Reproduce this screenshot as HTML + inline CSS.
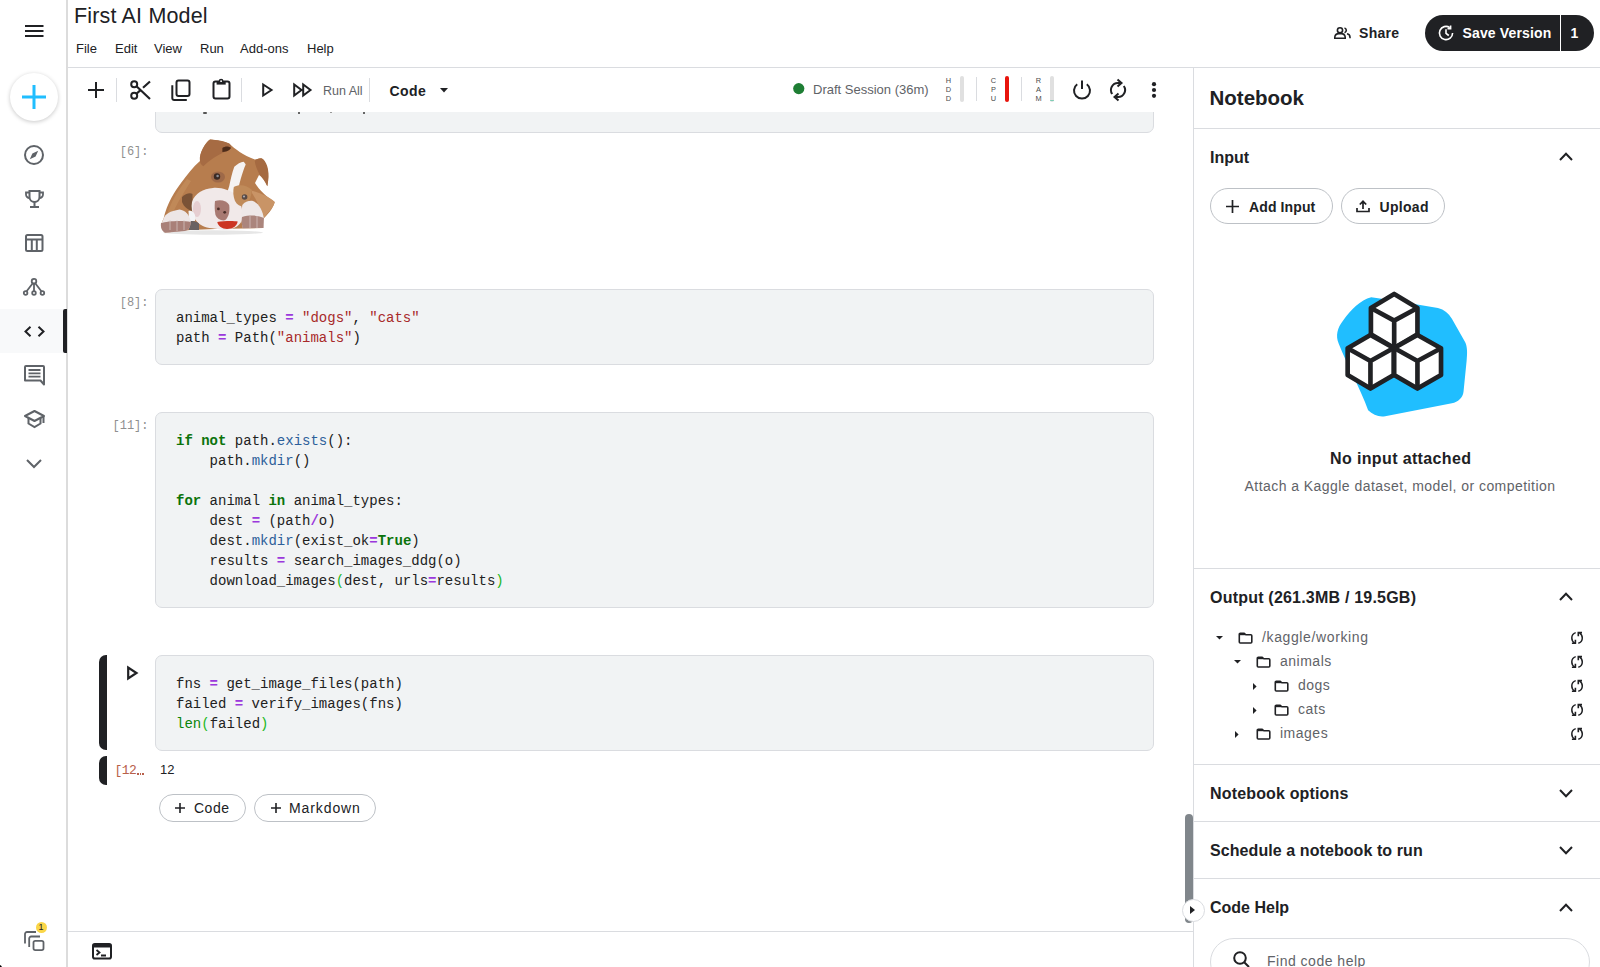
<!DOCTYPE html>
<html><head><meta charset="utf-8">
<style>
*{box-sizing:border-box;margin:0;padding:0}
html,body{width:1600px;height:967px;overflow:hidden;background:#fff;font-family:"Liberation Sans",sans-serif;color:#202124}
.a{position:absolute;white-space:nowrap;line-height:1}
svg{position:absolute;overflow:visible}
.mono{font-family:"Liberation Mono",monospace}
#sidebar{position:absolute;left:0;top:0;width:66px;height:967px;background:#fff}
#sbline{position:absolute;left:66px;top:0;width:2px;height:967px;background:#dcdcdc}
.hline{position:absolute;height:1px;background:#dadce0}
.vline{position:absolute;width:1px;background:#dadce0}
.cell{position:absolute;left:155px;width:999px;background:#f1f3f4;border:1px solid #dadce0;border-radius:7px}
.code{position:absolute;left:176px;font-family:"Liberation Mono",monospace;font-size:14px;line-height:20px;white-space:pre;color:#212121}
.k{color:#0b730b;font-weight:bold}
.o{color:#9b38dc;font-weight:bold}
.s{color:#a82a2a}
.f{color:#2d5f9a}
.b{color:#0b850b}
.pm{color:#22b822}
.prompt{position:absolute;font-family:"Liberation Mono",monospace;font-size:12px;line-height:1;color:#8f8f8f;white-space:pre;width:60px;text-align:right}
.btn{position:absolute;border:1px solid #bdc1c6;border-radius:18px;background:#fff}
.sec{position:absolute;left:1210px;font-size:16px;font-weight:bold;line-height:1;white-space:nowrap}
</style></head><body>

<!-- LEFT SIDEBAR -->
<div id="sidebar"></div>
<div id="sbline"></div>
<svg style="left:0;top:964.5px" width="3" height="3" viewBox="0 0 3 3"><path d="M0 0L1.2 0.8L2.2 2.5V3H0Z" fill="#000"/></svg>
<svg style="left:25px;top:25px" width="19" height="12" viewBox="0 0 19 12"><path d="M0 1H18.5M0 6H18.5M0 11H18.5" stroke="#202124" stroke-width="2"/></svg>
<div style="position:absolute;left:10px;top:73px;width:48px;height:48px;border-radius:24px;background:#fff;box-shadow:0 1px 4px rgba(0,0,0,0.22)"></div>
<svg style="left:22px;top:85px" width="24" height="24" viewBox="0 0 24 24"><path d="M12 0V24M0 12H24" stroke="#20beff" stroke-width="3"/></svg>
<svg style="left:24px;top:145px" width="20" height="20" viewBox="0 0 20 20"><circle cx="10" cy="10" r="9" fill="none" stroke="#5f6368" stroke-width="2"/><path d="M14.2 5.8L11.6 11.6L5.8 14.2L8.4 8.4Z" fill="#5f6368"/></svg>
<svg style="left:25px;top:190px" width="19" height="18" viewBox="0 0 19 18"><path d="M4.5 1H14.5V7A5 5 0 0 1 4.5 7Z" fill="none" stroke="#5f6368" stroke-width="2"/><path d="M4.5 2.5H1V4.5A3.5 3.5 0 0 0 4.6 8M14.5 2.5H18V4.5A3.5 3.5 0 0 1 14.4 8" fill="none" stroke="#5f6368" stroke-width="1.8"/><path d="M9.5 12V16.5M5 17H14" stroke="#5f6368" stroke-width="2"/></svg>
<svg style="left:25px;top:234px" width="19" height="18" viewBox="0 0 19 18"><rect x="1" y="1" width="16.5" height="16" rx="1.5" fill="none" stroke="#5f6368" stroke-width="2"/><path d="M1 5.5H17.5M6.8 5.5V17M11.8 5.5V17" stroke="#5f6368" stroke-width="2"/></svg>
<svg style="left:23px;top:278px" width="22" height="18" viewBox="0 0 22 18"><circle cx="11" cy="3.2" r="2.3" fill="none" stroke="#5f6368" stroke-width="1.8"/><circle cx="2.6" cy="15" r="1.8" fill="none" stroke="#5f6368" stroke-width="1.8"/><circle cx="11" cy="15" r="1.8" fill="none" stroke="#5f6368" stroke-width="1.8"/><circle cx="19.4" cy="15" r="1.8" fill="none" stroke="#5f6368" stroke-width="1.8"/><path d="M9.8 5.2L3.6 13.3M11 5.5V13.2M12.2 5.2L18.4 13.3" stroke="#5f6368" stroke-width="1.8"/></svg>
<div style="position:absolute;left:0;top:309px;width:63px;height:44px;background:#f8f9fa"></div>
<div style="position:absolute;left:62.5px;top:309px;width:4px;height:44px;background:#202124;border-radius:2px 0 0 2px"></div>
<svg style="left:24px;top:326px" width="21" height="11" viewBox="0 0 21 11"><path d="M6.5 0.8L1.5 5.5L6.5 10.2M14.5 0.8L19.5 5.5L14.5 10.2" fill="none" stroke="#202124" stroke-width="2"/></svg>
<svg style="left:24px;top:365px" width="21" height="20" viewBox="0 0 21 20"><path d="M1 15.5V2A1 1 0 0 1 2 1H19A1 1 0 0 1 20 2V19.5L16.5 15.5Z" fill="none" stroke="#5f6368" stroke-width="2" stroke-linejoin="round"/><path d="M4.5 5H16.5M4.5 8.3H16.5M4.5 11.6H16.5" stroke="#5f6368" stroke-width="1.8"/></svg>
<svg style="left:24px;top:410px" width="21" height="18" viewBox="0 0 21 18"><path d="M10.5 1L1 6L10.5 11L20 6Z" fill="none" stroke="#5f6368" stroke-width="2" stroke-linejoin="round"/><path d="M4.5 8V13.5L10.5 17L16.5 13.5V8" fill="none" stroke="#5f6368" stroke-width="2"/><path d="M19.5 6.5V13" stroke="#5f6368" stroke-width="2"/></svg>
<svg style="left:26px;top:459px" width="16" height="9" viewBox="0 0 16 9"><path d="M1 1L8 8L15 1" fill="none" stroke="#5f6368" stroke-width="2"/></svg>
<svg style="left:24px;top:931px" width="20" height="20" viewBox="0 0 20 20"><path d="M1 12.5V3A2 2 0 0 1 3 1H12" fill="none" stroke="#5f6368" stroke-width="1.8"/><path d="M5.2 16V7.5A2 2 0 0 1 7.2 5.5H16" fill="none" stroke="#5f6368" stroke-width="1.8"/><rect x="9.5" y="9.8" width="10" height="9.3" rx="1.8" fill="none" stroke="#5f6368" stroke-width="1.8"/></svg>
<div style="position:absolute;left:35.5px;top:921.5px;width:11px;height:11.5px;border-radius:6px;background:#fad648"></div>
<div class="a" style="left:38.5px;top:923px;font-size:9px;color:#202124">1</div>


<!-- HEADER -->
<div class="a" style="left:74px;top:5.5px;font-size:21.5px;letter-spacing:0.17px">First AI Model</div>
<div class="a" style="left:76px;top:42.4px;font-size:13px">File</div>
<div class="a" style="left:115px;top:42.4px;font-size:13px">Edit</div>
<div class="a" style="left:154px;top:42.4px;font-size:13px">View</div>
<div class="a" style="left:200px;top:42.4px;font-size:13px">Run</div>
<div class="a" style="left:240px;top:42.4px;font-size:13px">Add-ons</div>
<div class="a" style="left:307px;top:42.4px;font-size:13px">Help</div>

<svg style="left:1334px;top:27px" width="17" height="12" viewBox="0 0 17 12"><circle cx="6" cy="3.3" r="2.6" fill="none" stroke="#202124" stroke-width="1.6"/><path d="M0.8 11.2V10A4 4 0 0 1 4.8 6.6H7.2A4 4 0 0 1 11.2 10V11.2Z" fill="none" stroke="#202124" stroke-width="1.6"/><path d="M10.5 0.9A2.5 2.5 0 0 1 10.5 5.7M13 6.8A3.6 3.6 0 0 1 16 10.2V11.2" fill="none" stroke="#202124" stroke-width="1.6"/></svg>
<div class="a" style="left:1359px;top:26px;font-size:14px;font-weight:bold;letter-spacing:0.3px">Share</div>
<div style="position:absolute;left:1425px;top:15px;width:169px;height:36px;border-radius:18px;background:#202124"></div>
<div style="position:absolute;left:1560px;top:15px;width:1px;height:36px;background:#fff"></div>
<svg style="left:1438px;top:25px" width="16" height="16" viewBox="0 0 16 16"><path d="M14.6 8A6.6 6.6 0 1 1 11.8 2.6" fill="none" stroke="#fff" stroke-width="1.6"/><path d="M12.6 0.5V3.6H9.5" fill="none" stroke="#fff" stroke-width="1.6"/><path d="M8 4.2V8.3L10.8 10.5" fill="none" stroke="#fff" stroke-width="1.6"/></svg>
<div class="a" style="left:1462.5px;top:26px;font-size:14px;font-weight:bold;color:#fff;letter-spacing:0.15px">Save Version</div>
<div class="a" style="left:1570.5px;top:26px;font-size:14px;font-weight:bold;color:#fff">1</div>
<div class="hline" style="left:68px;top:67px;width:1532px"></div>

<!-- TOOLBAR -->
<!-- toolbar icons -->
<svg style="left:88px;top:82px" width="16" height="16" viewBox="0 0 16 16"><path d="M8 0V16M0 8H16" stroke="#202124" stroke-width="2"/></svg>
<div class="vline" style="left:116px;top:78px;height:24px"></div>
<svg style="left:130px;top:80px" width="21" height="20" viewBox="0 0 21 20"><circle cx="4.2" cy="4.2" r="3" fill="none" stroke="#202124" stroke-width="2"/><circle cx="4.2" cy="15.8" r="3" fill="none" stroke="#202124" stroke-width="2"/><path d="M6.5 6.3L20 19M6.5 13.7L11 9.6M13 7.8L20 1.5" stroke="#202124" stroke-width="2.2"/></svg>
<svg style="left:171px;top:79px" width="20" height="22" viewBox="0 0 20 22"><rect x="5.5" y="1.5" width="13" height="15.5" rx="2" fill="none" stroke="#202124" stroke-width="2"/><path d="M1.3 6.2V19.2A1.8 1.8 0 0 0 3.1 21H15.8" fill="none" stroke="#202124" stroke-width="2"/></svg>
<svg style="left:211px;top:78px" width="20" height="23" viewBox="0 0 20 23"><rect x="2.5" y="3.5" width="16" height="17" rx="2" fill="none" stroke="#202124" stroke-width="2"/><path d="M5.6 3H14.7V6.6H5.6Z" fill="#202124"/><circle cx="10.1" cy="3.2" r="2.4" fill="#202124"/><circle cx="10.1" cy="3.2" r="0.9" fill="#fff"/></svg>
<div class="vline" style="left:241px;top:78px;height:24px"></div>
<svg style="left:262px;top:83px" width="11" height="14" viewBox="0 0 11 14"><path d="M1.2 1.5V12.5L9.5 7Z" fill="none" stroke="#202124" stroke-width="2" stroke-linejoin="miter"/></svg>
<svg style="left:293px;top:83px" width="19" height="14" viewBox="0 0 19 14"><path d="M1.2 1.5V12.5L8.5 7Z M10.2 1.5V12.5L17.5 7Z" fill="none" stroke="#202124" stroke-width="2"/></svg>
<div class="a" style="left:323px;top:85.2px;font-size:12.5px;color:#5f6368">Run All</div>
<div class="vline" style="left:369px;top:78px;height:24px"></div>
<div class="a" style="left:389.5px;top:83.5px;font-size:14px;font-weight:bold;letter-spacing:0.45px">Code</div>
<svg style="left:440px;top:88px" width="8" height="5" viewBox="0 0 8 5"><path d="M0 0H8L4 4.5Z" fill="#202124"/></svg>

<svg style="left:793px;top:82.5px" width="12" height="12" viewBox="0 0 12 12"><circle cx="5.75" cy="5.6" r="5.6" fill="#1e7e34"/></svg>
<div class="a" style="left:813px;top:83px;font-size:13px;color:#5f6368">Draft Session (36m)</div>
<div class="a" style="left:945px;top:75.8px;font-size:7.4px;line-height:9px;color:#4a4a4a;text-align:center;width:7px;white-space:normal">H<br>D<br>D</div>
<div style="position:absolute;left:960px;top:76px;width:4px;height:26px;border-radius:2px;background:#e0e0e0"></div>
<div class="vline" style="left:976px;top:77px;height:24px"></div>
<div class="a" style="left:990px;top:75.8px;font-size:7.4px;line-height:9px;color:#4a4a4a;text-align:center;width:7px;white-space:normal">C<br>P<br>U</div>
<div style="position:absolute;left:1005px;top:76px;width:4px;height:26px;border-radius:2px;background:#e8140c"></div>
<div class="vline" style="left:1021px;top:77px;height:24px"></div>
<div class="a" style="left:1035px;top:75.8px;font-size:7.4px;line-height:9px;color:#4a4a4a;text-align:center;width:7px;white-space:normal">R<br>A<br>M</div>
<div style="position:absolute;left:1050px;top:76px;width:4px;height:26px;border-radius:2px;background:#e0e0e0;overflow:hidden"><div style="position:absolute;left:0;bottom:1px;width:4px;height:1px;background:#7fcdb5"></div></div>
<svg style="left:1072px;top:80px" width="20" height="20" viewBox="0 0 20 20"><path d="M5.2 4.2A8 8 0 1 0 14.8 4.2" fill="none" stroke="#202124" stroke-width="2"/><path d="M10 0.5V9" stroke="#202124" stroke-width="2"/></svg>
<svg style="left:1109px;top:79px" width="18" height="22" viewBox="0 0 18 22"><path d="M3.2 15A7 7 0 0 1 9 4H11" fill="none" stroke="#202124" stroke-width="2"/><path d="M8.5 0.5L12.5 4L8.5 7.5" fill="none" stroke="#202124" stroke-width="2"/><path d="M14.8 7A7 7 0 0 1 9 18H7" fill="none" stroke="#202124" stroke-width="2"/><path d="M9.5 14.5L5.5 18L9.5 21.5" fill="none" stroke="#202124" stroke-width="2"/></svg>
<svg style="left:1151px;top:82px" width="6" height="16" viewBox="0 0 6 16"><circle cx="3" cy="2.2" r="2.1" fill="#202124"/><circle cx="3" cy="8" r="2.1" fill="#202124"/><circle cx="3" cy="13.8" r="2.1" fill="#202124"/></svg>


<!-- NOTEBOOK -->
<div id="nb" style="position:absolute;left:68px;top:112px;width:1125px;height:819px;overflow:hidden">
<div class="cell" style="left:87px;top:-40px;height:61px"></div>
<div style="position:absolute;left:135px;top:0px;width:4px;height:2px;background:#555;border-radius:1px"></div>
<div style="position:absolute;left:230px;top:0px;width:2px;height:2px;background:#666"></div>
<div style="position:absolute;left:262px;top:0px;width:2px;height:1px;background:#999"></div>
<div style="position:absolute;left:295px;top:0px;width:2px;height:2px;background:#666"></div>

<div class="prompt" style="left:20.5px;top:34px">[6]:</div>
<svg style="left:87px;top:23px" width="130" height="105" viewBox="0 0 130 105">
<ellipse cx="58" cy="97.5" rx="50" ry="2.2" fill="#e6e6e6"/>
<path d="M8.5 84C12 68 20 56 26 48C32 40 38 32 45 26L45.5 20C48 12 52 6 55 4.5C62 5 70 7 74 8.5C80 14 88 20 99.8 24.5L106.6 23.3C112 28 115 38 112.3 51.2C110 46 107 42 104 40L100 48C104 55 112 62 119.7 67C118 74 112 80 108 84L108 93L60 94L35 95L10 97.8C6 94 5 90 8.5 84Z" fill="#b77d4e"/>
<path d="M12 80C16 66 24 54 32 44L36 46C30 56 22 68 17 80Z" fill="#c7915f" opacity="0.6"/>
<path d="M44.9 25.6C44 18 50 8 55.2 4.5C62 5 70 6 74.2 8.5C78 12 76 15 72 16C62 20 55 25 48.3 31.3C46 30 45 28 44.9 25.6Z" fill="#a66b43"/>
<path d="M67.4 13C70 11 74 11 76 13C74 16 70 17 67.4 17Z" fill="#4d2c1a"/>
<path d="M99.8 26C102 23 106 22.5 108 24C113 29 115 38 112.3 51.2C110 46 107 42 104.5 39.5C102 34 100 30 99.8 26Z" fill="#a56a41"/>
<path d="M97 55.7C105 58 115 62 119.7 67C119 72 114 76 108 84C106 74 101 64 97 58Z" fill="#c99466"/>
<path d="M27 62C30 59 35 57 37.5 59L37.5 76C33 75 29 72 27 67Z" fill="#7a5236"/>
<path d="M88.4 26.7C86 27 82 29 79.3 31.8C77 38 75.5 45 74.2 51.2L72 58L82 60C84 50 87 38 90.7 29.6C90 28 89 27 88.4 26.7Z" fill="#f5f3f3"/>
<ellipse cx="63" cy="42" rx="7" ry="5.5" fill="#8a5a44" opacity="0.55"/>
<path d="M37 67C40 58 48 54 58 53C66 52 76 56 82 60C86 66 88 75 87.3 84C86 90 80 94 70 95L57 93.2C50 93 44 90 39.8 84C37 78 36 72 37 67Z" fill="#f1e9e9"/>
<ellipse cx="42" cy="74" rx="4" ry="8" fill="#dcb8bd" opacity="0.55"/>
<path d="M60 66C66 64 72 66 74.2 70C75 76 74 82 70 85.3C66 86 62 84 60.5 80C59.5 75 59.5 70 60 66Z" fill="#a87a72"/>
<circle cx="63.4" cy="73.9" r="1.4" fill="#4a2e28"/>
<circle cx="69.7" cy="77.3" r="1.4" fill="#4a2e28"/>
<path d="M78.8 52C84 49 92 50 97 55C96 62 94 68 90 71.6C86 72 82 70 80 66C78 61 78 56 78.8 52Z" fill="#c08b5a"/>
<circle cx="89.6" cy="62" r="2.8" fill="#5a4a44"/>
<circle cx="89" cy="61.5" r="1.1" fill="#a9aab2"/>
<circle cx="62" cy="41.5" r="3.2" fill="#3a2a24"/>
<circle cx="62.6" cy="41" r="1.3" fill="#8c8e96"/>
<path d="M33.5 76C36 75 39 77 40 80L40 86L34 86Z" fill="#f4f4f6"/><path d="M34 86.5C38 85.5 42 86.5 44 88.5L44 95L34 95Z" fill="#6a6262"/>
<path d="M8.5 84C10 79 15 76 24.5 74.5C30 75 35 80 35.8 87C35 92 34 95 30 96L10.2 97.8C6 96 5 90 8.5 84Z" fill="#ede6e6"/>
<path d="M6 88C12 86 28 85 35.8 87C35.5 92 34 95 30 96L10.2 97.8C6.5 96 5.5 92 6 88Z" fill="#a98078"/>
<path d="M15 85V95M22 85V96M29 85V95" stroke="#d9c9c6" stroke-width="1" opacity="0.7"/>
<path d="M87.3 70C90 66 95 65.5 98 66C104 68 108 76 108.9 84L108.5 93L88 93.2C86 88 86 78 87.3 70Z" fill="#eee8e8"/>
<path d="M87 82C94 80 104 80 108.9 83L108.5 93L88 93.2C86.5 90 86.5 85 87 82Z" fill="#ab857c"/>
<path d="M95 81V93M102 81V93" stroke="#d9c9c6" stroke-width="1" opacity="0.7"/>
<path d="M62.3 87C68 86 78 85.5 82.7 86.5C82 91 78 94 72 94C67 94 63 91 62.3 87Z" fill="#cc3522"/>
</svg>

<div class="prompt" style="left:20.5px;top:185px">[8]:</div>
<div class="cell" style="left:87px;top:177px;height:76px"></div>
<div class="code" style="left:108px;top:196px"><span>animal_types </span><span class="o">=</span> <span class="s">"dogs"</span>, <span class="s">"cats"</span>
path <span class="o">=</span> Path(<span class="s">"animals"</span>)</div>

<div class="prompt" style="left:20.5px;top:308px">[11]:</div>
<div class="cell" style="left:87px;top:300px;height:196px"></div>
<div class="code" style="left:108px;top:319px"><span class="k">if</span> <span class="k">not</span> path.<span class="f">exists</span>():
    path.<span class="f">mkdir</span>()

<span class="k">for</span> animal <span class="k">in</span> animal_types:
    dest <span class="o">=</span> (path<span class="o">/</span>o)
    dest.<span class="f">mkdir</span>(exist_ok<span class="o">=</span><span class="k">True</span>)
    results <span class="o">=</span> search_images_ddg(o)
    download_images<span class="pm">(</span>dest, urls<span class="o">=</span>results<span class="pm">)</span></div>

<div style="position:absolute;left:31px;top:543px;width:8px;height:95px;background:#202124;border-radius:7px 0 0 7px"></div>
<svg style="left:58.5px;top:554px" width="11" height="14" viewBox="0 0 11 14"><path d="M1.2 1.5V12.5L9.5 7Z" fill="none" stroke="#202124" stroke-width="2.2"/></svg>
<div class="cell" style="left:87px;top:543px;height:96px"></div>
<div class="code" style="left:108px;top:562px">fns <span class="o">=</span> get_image_files(path)
failed <span class="o">=</span> verify_images(fns)
<span class="b">len</span><span class="pm">(</span>failed<span class="pm">)</span></div>

<div style="position:absolute;left:31px;top:644px;width:8px;height:29px;background:#202124;border-radius:7px 0 0 7px"></div>
<div class="prompt" style="left:46.5px;top:652px;color:#b8604a;text-align:left;font-size:13px;letter-spacing:-0.6px">[12</div><div style="position:absolute;left:69px;top:660.8px;width:1.8px;height:2.2px;background:#b8604a"></div><div style="position:absolute;left:71.7px;top:660.8px;width:1.8px;height:2.2px;background:#b8604a"></div><div style="position:absolute;left:74.4px;top:660.8px;width:1.8px;height:2.2px;background:#b8604a"></div>
<div class="a" style="left:92px;top:650.5px;font-size:13px;color:#202124">12</div>

<div class="btn" style="left:91px;top:682px;width:87px;height:28px;border-radius:14px"></div>
<svg style="left:107px;top:691px" width="10" height="10" viewBox="0 0 10 10"><path d="M5 0V10M0 5H10" stroke="#202124" stroke-width="1.6"/></svg>
<div class="a" style="left:126px;top:689px;font-size:14px;letter-spacing:0.5px">Code</div>
<div class="btn" style="left:186px;top:682px;width:122px;height:28px;border-radius:14px"></div>
<svg style="left:202.5px;top:691px" width="10" height="10" viewBox="0 0 10 10"><path d="M5 0V10M0 5H10" stroke="#202124" stroke-width="1.6"/></svg>
<div class="a" style="left:221px;top:689px;font-size:14px;letter-spacing:0.9px">Markdown</div>

<div style="position:absolute;left:1117px;top:702px;width:8px;height:109px;border-radius:4px;background:#80868b"></div>
</div>

<!-- BOTTOM BAR -->
<div class="hline" style="left:68px;top:931px;width:1125px"></div>
<svg style="left:92px;top:943px" width="20" height="16" viewBox="0 0 20 16"><rect x="1" y="1" width="18" height="14.5" rx="1.8" fill="none" stroke="#202124" stroke-width="2"/><path d="M1 3H19" stroke="#202124" stroke-width="3"/><path d="M4.5 7L7.5 9.5L4.5 12M9 12.5H14" fill="none" stroke="#202124" stroke-width="1.8"/></svg>


<!-- RIGHT PANEL -->
<div class="vline" style="left:1193px;top:68px;height:899px"></div>
<div class="a" style="left:1209.5px;top:88px;font-size:20.5px;font-weight:bold">Notebook</div>
<div class="hline" style="left:1194px;top:128px;width:406px"></div>
<div class="sec" style="top:150px">Input</div>
<svg style="left:1559px;top:152px" width="14" height="9" viewBox="0 0 14 9"><path d="M1 8L7 1.8L13 8" fill="none" stroke="#202124" stroke-width="2"/></svg>
<div class="btn" style="left:1210px;top:188px;width:123px;height:36px"></div>
<svg style="left:1225.5px;top:199.5px" width="13" height="13" viewBox="0 0 13 13"><path d="M6.5 0V13M0 6.5H13" stroke="#202124" stroke-width="1.7"/></svg>
<div class="a" style="left:1249px;top:200px;font-size:14px;font-weight:bold;letter-spacing:0.12px">Add Input</div>
<div class="btn" style="left:1341px;top:188px;width:104px;height:36px"></div>
<svg style="left:1356px;top:200px" width="14" height="13" viewBox="0 0 14 13"><path d="M1 8V11.5H13V8" fill="none" stroke="#202124" stroke-width="1.7"/><path d="M7 9V1.5M3.8 4.5L7 1.3L10.2 4.5" fill="none" stroke="#202124" stroke-width="1.7"/></svg>
<div class="a" style="left:1379.5px;top:200px;font-size:14px;font-weight:bold;letter-spacing:0.3px">Upload</div>

<svg style="left:1320px;top:280px" width="160" height="150" viewBox="0 0 1031 967">
<path d="M150 260 C200 190 260 130 330 112 C480 130 620 160 760 180 C800 190 830 215 850 250 L935 400 C950 430 950 470 945 520 L925 720 C920 760 890 785 850 795 L420 878 C380 885 340 870 310 840 C260 700 180 560 120 410 C100 360 110 310 150 260 Z" fill="#20beff"/>
<g fill="#fff" stroke="#202124" stroke-width="30" stroke-linejoin="round">
<path d="M478 90 L628 180 L628 350 L478 438 L328 350 L328 180 Z"/>
<path d="M325 355 L475 438 L475 612 L325 700 L178 612 L178 440 Z"/>
<path d="M628 355 L780 440 L780 612 L628 700 L478 612 L478 438 Z"/>
</g>
<g fill="none" stroke="#202124" stroke-width="30" stroke-linejoin="round">
<path d="M328 180 L478 262 L628 180 M478 262 L478 438"/>
<path d="M178 440 L325 522 L475 438 M325 522 L325 700"/>
<path d="M478 438 L628 522 L780 440 M628 522 L628 700"/>
</g>
</svg>
<div class="a" style="left:1330px;top:450.5px;font-size:16px;font-weight:bold;letter-spacing:0.37px">No input attached</div>
<div class="a" style="left:1244.5px;top:478.5px;font-size:14px;color:#5f6368;letter-spacing:0.45px">Attach a Kaggle dataset, model, or competition</div>

<div class="hline" style="left:1194px;top:568px;width:406px"></div>
<div class="sec" style="top:590px;letter-spacing:0.21px">Output (261.3MB / 19.5GB)</div>
<svg style="left:1559px;top:592px" width="14" height="9" viewBox="0 0 14 9"><path d="M1 8L7 1.8L13 8" fill="none" stroke="#202124" stroke-width="2"/></svg>
<svg style="left:1215.5px;top:636.2px" width="7" height="4" viewBox="0 0 7 4"><path d="M0 0H7L3.5 3.6Z" fill="#202124"/></svg>
<svg style="left:1237.5px;top:632px" width="15" height="12" viewBox="0 0 15 12"><path d="M1.3 10V2.2A1 1 0 0 1 2.3 1.2H6.2L7.8 2.8H12.8A1 1 0 0 1 13.8 3.8V10A1 1 0 0 1 12.8 11H2.3A1 1 0 0 1 1.3 10Z" fill="none" stroke="#202124" stroke-width="1.6" stroke-linejoin="round"/><path d="M1.3 2.2H7" stroke="#202124" stroke-width="2"/></svg>
<div class="a" style="left:1262px;top:630.0px;font-size:14px;color:#5f6368;letter-spacing:0.62px">/kaggle/working</div>
<svg style="left:1571px;top:632px" width="13" height="12" viewBox="0 0 13 12"><path d="M4.7 0.6C2.4 1.3 0.8 3.4 0.8 5.9C0.8 8 1.9 9.9 3.6 11" fill="none" stroke="#202124" stroke-width="1.5"/><path d="M0.9 11.2H4.4V7.8" fill="none" stroke="#202124" stroke-width="1.6"/><path d="M7.3 11.2C9.6 10.5 11.3 8.4 11.3 5.9C11.3 3.8 10.2 1.9 8.5 0.8" fill="none" stroke="#202124" stroke-width="1.5"/><path d="M11 0.6H7.3V4.2" fill="none" stroke="#202124" stroke-width="1.6"/></svg>
<svg style="left:1233.5px;top:660.2px" width="7" height="4" viewBox="0 0 7 4"><path d="M0 0H7L3.5 3.6Z" fill="#202124"/></svg>
<svg style="left:1255.5px;top:656px" width="15" height="12" viewBox="0 0 15 12"><path d="M1.3 10V2.2A1 1 0 0 1 2.3 1.2H6.2L7.8 2.8H12.8A1 1 0 0 1 13.8 3.8V10A1 1 0 0 1 12.8 11H2.3A1 1 0 0 1 1.3 10Z" fill="none" stroke="#202124" stroke-width="1.6" stroke-linejoin="round"/><path d="M1.3 2.2H7" stroke="#202124" stroke-width="2"/></svg>
<div class="a" style="left:1280px;top:654.0px;font-size:14px;color:#5f6368;letter-spacing:0.5px">animals</div>
<svg style="left:1571px;top:656px" width="13" height="12" viewBox="0 0 13 12"><path d="M4.7 0.6C2.4 1.3 0.8 3.4 0.8 5.9C0.8 8 1.9 9.9 3.6 11" fill="none" stroke="#202124" stroke-width="1.5"/><path d="M0.9 11.2H4.4V7.8" fill="none" stroke="#202124" stroke-width="1.6"/><path d="M7.3 11.2C9.6 10.5 11.3 8.4 11.3 5.9C11.3 3.8 10.2 1.9 8.5 0.8" fill="none" stroke="#202124" stroke-width="1.5"/><path d="M11 0.6H7.3V4.2" fill="none" stroke="#202124" stroke-width="1.6"/></svg>
<svg style="left:1253.2px;top:682.5px" width="4" height="7" viewBox="0 0 4 7"><path d="M0 0V7L3.6 3.5Z" fill="#202124"/></svg>
<svg style="left:1273.5px;top:680px" width="15" height="12" viewBox="0 0 15 12"><path d="M1.3 10V2.2A1 1 0 0 1 2.3 1.2H6.2L7.8 2.8H12.8A1 1 0 0 1 13.8 3.8V10A1 1 0 0 1 12.8 11H2.3A1 1 0 0 1 1.3 10Z" fill="none" stroke="#202124" stroke-width="1.6" stroke-linejoin="round"/><path d="M1.3 2.2H7" stroke="#202124" stroke-width="2"/></svg>
<div class="a" style="left:1298px;top:678.0px;font-size:14px;color:#5f6368;letter-spacing:0.5px">dogs</div>
<svg style="left:1571px;top:680px" width="13" height="12" viewBox="0 0 13 12"><path d="M4.7 0.6C2.4 1.3 0.8 3.4 0.8 5.9C0.8 8 1.9 9.9 3.6 11" fill="none" stroke="#202124" stroke-width="1.5"/><path d="M0.9 11.2H4.4V7.8" fill="none" stroke="#202124" stroke-width="1.6"/><path d="M7.3 11.2C9.6 10.5 11.3 8.4 11.3 5.9C11.3 3.8 10.2 1.9 8.5 0.8" fill="none" stroke="#202124" stroke-width="1.5"/><path d="M11 0.6H7.3V4.2" fill="none" stroke="#202124" stroke-width="1.6"/></svg>
<svg style="left:1253.2px;top:706.5px" width="4" height="7" viewBox="0 0 4 7"><path d="M0 0V7L3.6 3.5Z" fill="#202124"/></svg>
<svg style="left:1273.5px;top:704px" width="15" height="12" viewBox="0 0 15 12"><path d="M1.3 10V2.2A1 1 0 0 1 2.3 1.2H6.2L7.8 2.8H12.8A1 1 0 0 1 13.8 3.8V10A1 1 0 0 1 12.8 11H2.3A1 1 0 0 1 1.3 10Z" fill="none" stroke="#202124" stroke-width="1.6" stroke-linejoin="round"/><path d="M1.3 2.2H7" stroke="#202124" stroke-width="2"/></svg>
<div class="a" style="left:1298px;top:702.0px;font-size:14px;color:#5f6368;letter-spacing:0.5px">cats</div>
<svg style="left:1571px;top:704px" width="13" height="12" viewBox="0 0 13 12"><path d="M4.7 0.6C2.4 1.3 0.8 3.4 0.8 5.9C0.8 8 1.9 9.9 3.6 11" fill="none" stroke="#202124" stroke-width="1.5"/><path d="M0.9 11.2H4.4V7.8" fill="none" stroke="#202124" stroke-width="1.6"/><path d="M7.3 11.2C9.6 10.5 11.3 8.4 11.3 5.9C11.3 3.8 10.2 1.9 8.5 0.8" fill="none" stroke="#202124" stroke-width="1.5"/><path d="M11 0.6H7.3V4.2" fill="none" stroke="#202124" stroke-width="1.6"/></svg>
<svg style="left:1235.2px;top:730.5px" width="4" height="7" viewBox="0 0 4 7"><path d="M0 0V7L3.6 3.5Z" fill="#202124"/></svg>
<svg style="left:1255.5px;top:728px" width="15" height="12" viewBox="0 0 15 12"><path d="M1.3 10V2.2A1 1 0 0 1 2.3 1.2H6.2L7.8 2.8H12.8A1 1 0 0 1 13.8 3.8V10A1 1 0 0 1 12.8 11H2.3A1 1 0 0 1 1.3 10Z" fill="none" stroke="#202124" stroke-width="1.6" stroke-linejoin="round"/><path d="M1.3 2.2H7" stroke="#202124" stroke-width="2"/></svg>
<div class="a" style="left:1280px;top:726.0px;font-size:14px;color:#5f6368;letter-spacing:0.5px">images</div>
<svg style="left:1571px;top:728px" width="13" height="12" viewBox="0 0 13 12"><path d="M4.7 0.6C2.4 1.3 0.8 3.4 0.8 5.9C0.8 8 1.9 9.9 3.6 11" fill="none" stroke="#202124" stroke-width="1.5"/><path d="M0.9 11.2H4.4V7.8" fill="none" stroke="#202124" stroke-width="1.6"/><path d="M7.3 11.2C9.6 10.5 11.3 8.4 11.3 5.9C11.3 3.8 10.2 1.9 8.5 0.8" fill="none" stroke="#202124" stroke-width="1.5"/><path d="M11 0.6H7.3V4.2" fill="none" stroke="#202124" stroke-width="1.6"/></svg>
<div class="hline" style="left:1194px;top:764px;width:406px"></div>
<div class="sec" style="top:786px;letter-spacing:0.16px">Notebook options</div>
<svg style="left:1559px;top:789px" width="14" height="9" viewBox="0 0 14 9"><path d="M1 1L7 7.2L13 1" fill="none" stroke="#202124" stroke-width="2"/></svg>
<div class="hline" style="left:1194px;top:821px;width:406px"></div>
<div class="sec" style="top:843px;letter-spacing:0.08px">Schedule a notebook to run</div>
<svg style="left:1559px;top:846px" width="14" height="9" viewBox="0 0 14 9"><path d="M1 1L7 7.2L13 1" fill="none" stroke="#202124" stroke-width="2"/></svg>
<div class="hline" style="left:1194px;top:878px;width:406px"></div>
<div class="sec" style="top:900px">Code Help</div>
<svg style="left:1559px;top:903px" width="14" height="9" viewBox="0 0 14 9"><path d="M1 8L7 1.8L13 8" fill="none" stroke="#202124" stroke-width="2"/></svg>
<div style="position:absolute;left:1210px;top:938px;width:380px;height:48px;border:1px solid #dadce0;border-radius:24px;background:#fff"></div>
<svg style="left:1233px;top:951px" width="17" height="17" viewBox="0 0 17 17"><circle cx="7" cy="7" r="5.8" fill="none" stroke="#202124" stroke-width="2"/><path d="M11.2 11.2L16 16" stroke="#202124" stroke-width="2"/></svg>
<div class="a" style="left:1267px;top:954.3px;font-size:14px;color:#5f6368;letter-spacing:0.5px">Find code help</div>

<div style="position:absolute;left:1181.5px;top:898.5px;width:23px;height:23px;border-radius:12px;background:#fff;border:1px solid #dadce0"></div>
<svg style="left:1190px;top:906px" width="6" height="8" viewBox="0 0 6 8"><path d="M0 0V8L5 4Z" fill="#202124"/></svg>


</body></html>
